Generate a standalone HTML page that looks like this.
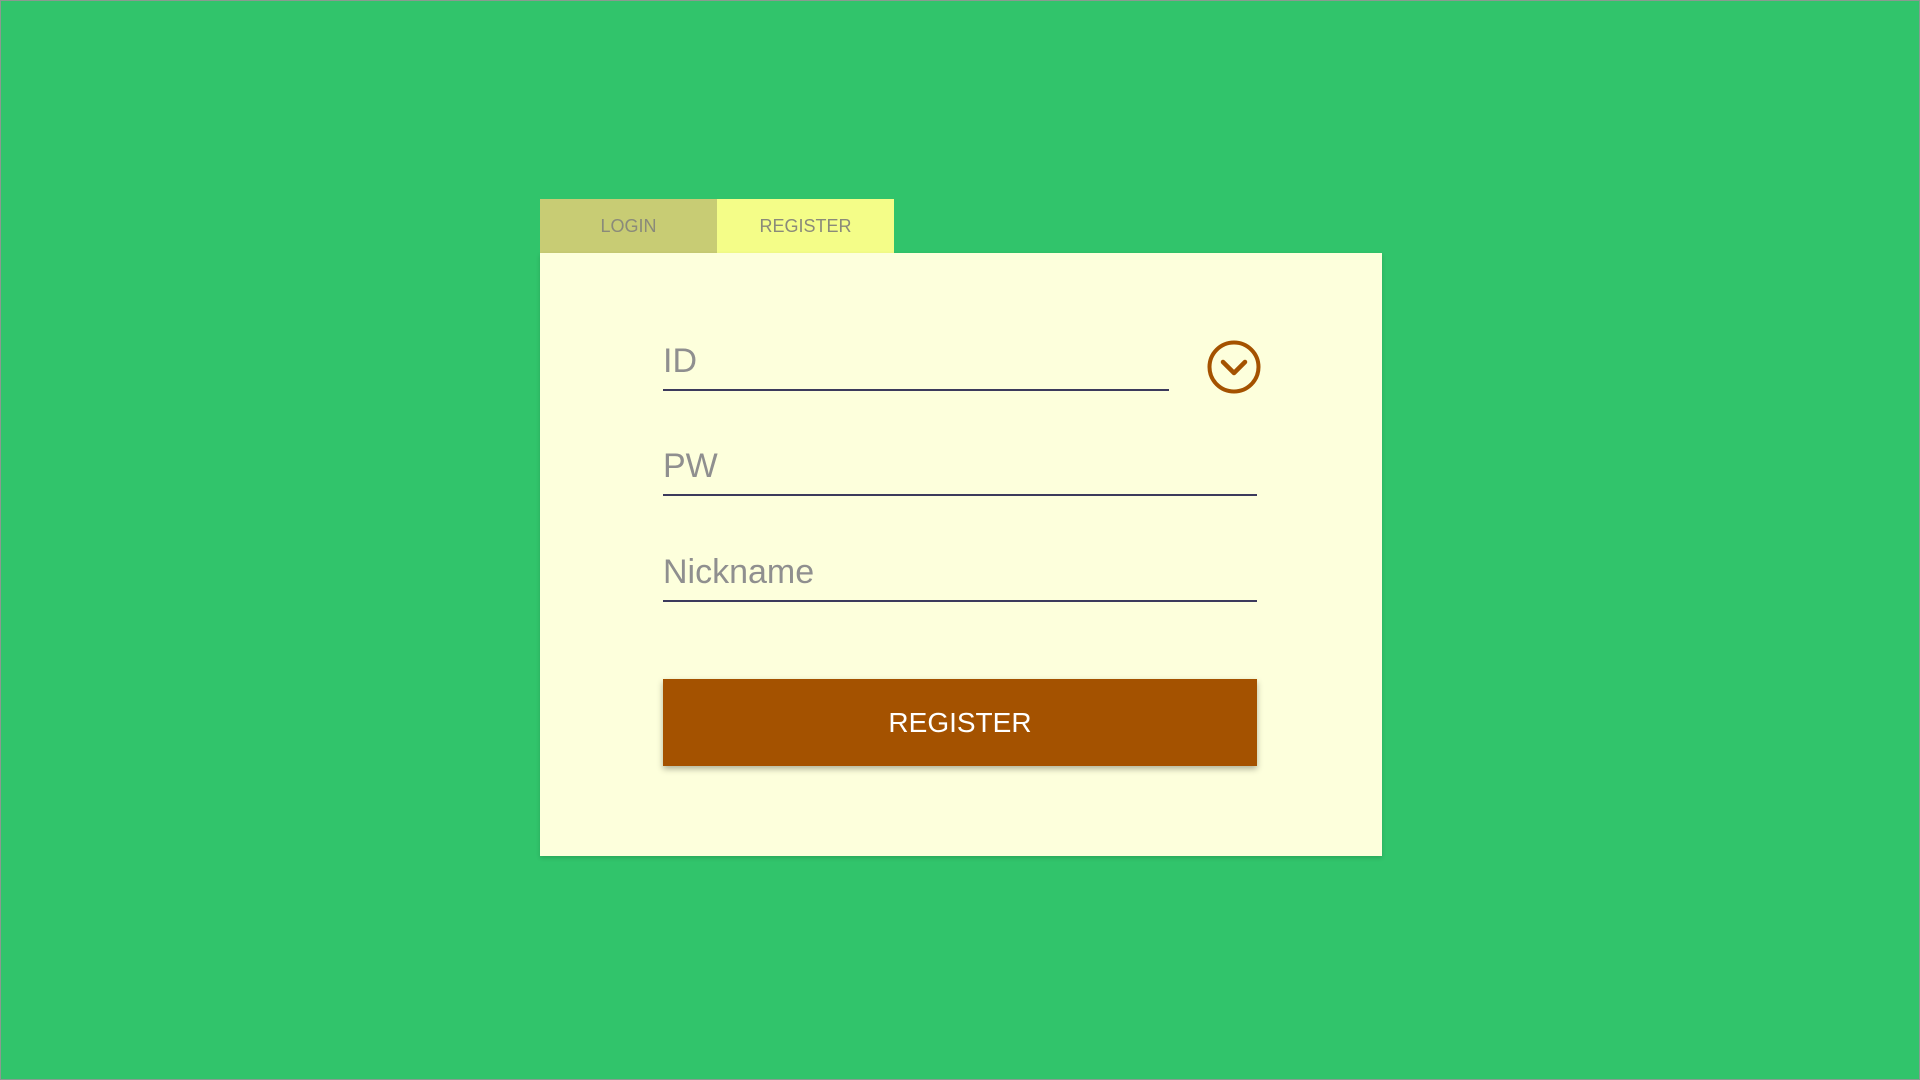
<!DOCTYPE html>
<html><head><meta charset="utf-8"><style>
html,body{margin:0;padding:0;}
body{width:1920px;height:1080px;background:#31c46b;position:relative;overflow:hidden;font-family:"Liberation Sans",sans-serif;box-sizing:border-box;border:1px solid #8a9a90;}
.tab{position:absolute;top:198px;height:54px;width:177px;display:flex;align-items:center;justify-content:center;font-size:18px;color:#8a8a7a;}
.panel{position:absolute;left:539px;top:252px;width:842px;height:603px;background:#fdffdc;box-shadow:0 2px 4px rgba(0,0,0,0.15);}
.field{position:absolute;left:662px;border-bottom:2px solid #3c3a5c;color:#8f8f8f;font-size:34px;height:50px;line-height:44px;}
.btn{position:absolute;left:662px;top:678px;width:594px;height:87px;background:#a45200;color:#fff;font-size:28px;display:flex;align-items:center;justify-content:center;box-shadow:0 3px 6px rgba(0,0,0,0.3);}
</style></head><body>
<div class="tab" style="left:539px;background:#c8cc74;">LOGIN</div>
<div class="tab" style="left:716px;background:#f4fd88;">REGISTER</div>
<div class="panel"></div>
<div class="field" style="top:338px;width:506px;">ID</div>
<svg style="position:absolute;left:1205px;top:338px" width="56" height="56" viewBox="0 0 56 56"><circle cx="28" cy="28" r="24.5" fill="none" stroke="#a45200" stroke-width="4"/><path d="M17 23 L28 34 L39 23" fill="none" stroke="#a45200" stroke-width="4.5" stroke-linecap="round" stroke-linejoin="round"/></svg>
<div class="field" style="top:443px;width:594px;">PW</div>
<div class="field" style="top:549px;width:594px;">Nickname</div>
<div class="btn">REGISTER</div>
</body></html>
